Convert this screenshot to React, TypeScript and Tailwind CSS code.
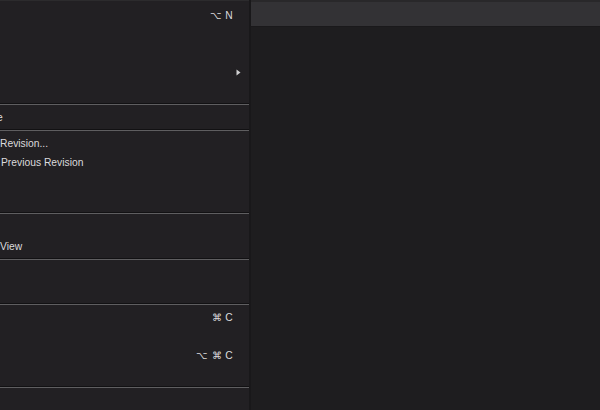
const font = { fontFamily: '"Liberation Sans", Arial, sans-serif' };

type Item =
  | { kind: "row"; label?: string; shortcut?: string; submenu?: boolean; shift?: number }
  | { kind: "sep"; tall?: boolean };

const items: Item[] = [
  { kind: "row", shortcut: "⌥ N" },
  { kind: "row" },
  { kind: "row" },
  { kind: "row", submenu: true },
  { kind: "row" },
  { kind: "sep" },
  { kind: "row", label: "e", shift: 3 },
  { kind: "sep" },
  { kind: "row", label: "Revision..." },
  { kind: "row", label: "Previous Revision", shift: -1 },
  { kind: "row" },
  { kind: "row" },
  { kind: "sep", tall: true },
  { kind: "row" },
  { kind: "row", label: "View" },
  { kind: "sep" },
  { kind: "row" },
  { kind: "row" },
  { kind: "sep" },
  { kind: "row", shortcut: "⌘ C" },
  { kind: "row" },
  { kind: "row", shortcut: "⌥ ⌘ C" },
  { kind: "row", label: "t", shift: 3 },
  { kind: "sep" },
  { kind: "row" },
];

function MenuRow({ item }: { item: Extract<Item, { kind: "row" }> }) {
  return (
    <div className="h-[19px] flex items-center pt-[2px] pr-[16px] text-[10.3px] text-[#dcdbdd] overflow-hidden">
      <div className="flex-1 min-w-0 whitespace-nowrap">
        {item.label && (
          <span className="inline-block" style={{ marginLeft: -(item.shift ?? 0) }}>
            {item.label}
          </span>
        )}
      </div>
      {item.shortcut && <span className="whitespace-nowrap tracking-[0.3px]">{item.shortcut}</span>}
      {item.submenu && (
        <svg width="5" height="7" viewBox="0 0 5 7" className="-mr-[8px] ml-[4px] -mt-[1px]">
          <path d="M0.5 0.5 L4.5 3.5 L0.5 6.5 Z" fill="#d0cfd1" />
        </svg>
      )}
    </div>
  );
}

export default function App() {
  return (
    <div className="w-[600px] h-[410px] flex overflow-hidden bg-[#1e1d1f]" style={font}>
      <div className="w-[249px] h-full bg-[#222023] border-t border-[#2c2b2d] pt-[4px] shrink-0 overflow-hidden">
        {items.map((item, i) =>
          item.kind === "sep" ? (
            <div
              key={i}
              className={item.tall ? "h-[8px] flex flex-col justify-center" : "h-[7px] flex flex-col justify-center"}
            >
              <div className="h-px bg-[#121113]" />
              <div className="h-px bg-[#5f5e60]" />
            </div>
          ) : (
            <MenuRow key={i} item={item} />
          )
        )}
      </div>
      <div className="w-[2px] h-full bg-[#19181a] shrink-0" />
      <div className="flex-1 flex flex-col">
        <div className="h-[2px] bg-[#29282a]" />
        <div className="h-[25px] bg-[#333235] border-b border-[#1a191b]" />
        <div className="flex-1 bg-[#1e1d1f]" />
      </div>
    </div>
  );
}
